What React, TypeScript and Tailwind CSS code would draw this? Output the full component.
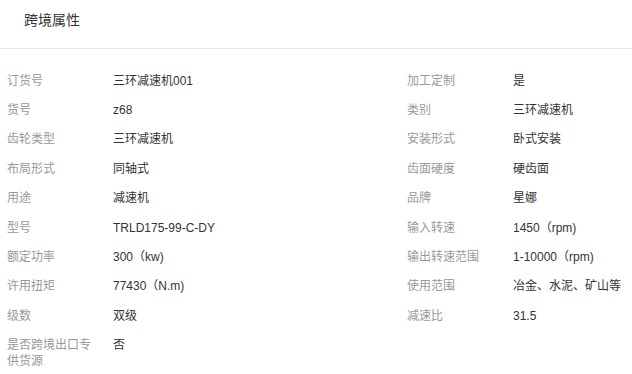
const left: [string, string][] = [
  ["订货号", "三环减速机001"],
  ["货号", "z68"],
  ["齿轮类型", "三环减速机"],
  ["布局形式", "同轴式"],
  ["用途", "减速机"],
  ["型号", "TRLD175-99-C-DY"],
  ["额定功率", "300（kw)"],
  ["许用扭矩", "77430（N.m)"],
  ["级数", "双级"],
  ["是否跨境出口专供货源", "否"],
];

const right: [string, string][] = [
  ["加工定制", "是"],
  ["类别", "三环减速机"],
  ["安装形式", "卧式安装"],
  ["齿面硬度", "硬齿面"],
  ["品牌", "星娜"],
  ["输入转速", "1450（rpm)"],
  ["输出转速范围", "1-10000（rpm)"],
  ["使用范围", "冶金、水泥、矿山等"],
  ["减速比", "31.5"],
];

const Row = ({ label, value }: { label: string; value: string }) => (
  <div className="flex py-[7px] text-[12px] leading-[15.4px]">
    <div className="w-[106px] shrink-0 pr-[14px] text-[#999999]">{label}</div>
    <div className="text-[#333333] whitespace-nowrap">{value}</div>
  </div>
);

const App = () => {
  return (
    <div
      className="w-[632px] h-[374px] bg-white overflow-hidden"
      style={{ fontFamily: '"Liberation Sans", "Noto Sans CJK SC", sans-serif' }}
    >
      <div className="h-[49px] border-b border-[#e8e8e8] pl-[24px] pt-[8px]">
        <span className="text-[14px] leading-[18px] text-[#333333]">跨境属性</span>
      </div>
      <div className="flex pt-[17.5px]">
        <div className="w-[407px] shrink-0 pl-[7px]">
          {left.map(([l, v]) => (
            <Row key={l} label={l} value={v} />
          ))}
        </div>
        <div className="flex-1">
          {right.map(([l, v]) => (
            <Row key={l} label={l} value={v} />
          ))}
        </div>
      </div>
    </div>
  );
};

export default App;
